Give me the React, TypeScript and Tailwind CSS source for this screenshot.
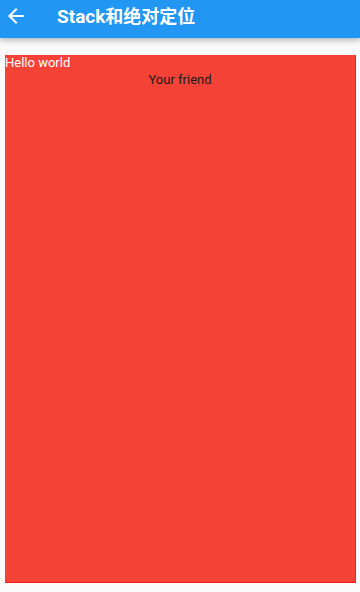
export default function App() {
  return (
    <div className="min-h-[592px] bg-[#fafafa] font-['Roboto','Noto_Sans_CJK_SC',sans-serif]">
      {/* App bar */}
      <div className="relative z-10 flex h-[38px] items-center bg-[#2196f3] shadow-[0_2px_6px_rgba(0,0,0,0.3)]">
        <svg className="ml-[4px] -mt-[6px]" width="24" height="24" viewBox="0 0 24 24" fill="#fff">
          <path d="M20 11H7.83l5.59-5.59L12 4l-8 8 8 8 1.41-1.41L7.83 13H20v-2z" />
        </svg>
        <div className="ml-[29px] -mt-[5px] text-[19px] font-bold leading-none text-white">
          Stack<span className="text-[18px]">和绝对定位</span>
        </div>
      </div>

      {/* Stack */}
      <div className="relative ml-[5px] mt-[17px] flex h-[528px] w-[351px] justify-center border-r border-b border-[#ff1a1a] bg-[#f44336]">
        <span className="absolute left-0 top-0 text-[13px] leading-[16px] text-white">Hello world</span>
        <span className="mt-[17px] text-[13px] leading-[16px] text-[#1a1a1a]">Your friend</span>
      </div>
    </div>
  );
}
